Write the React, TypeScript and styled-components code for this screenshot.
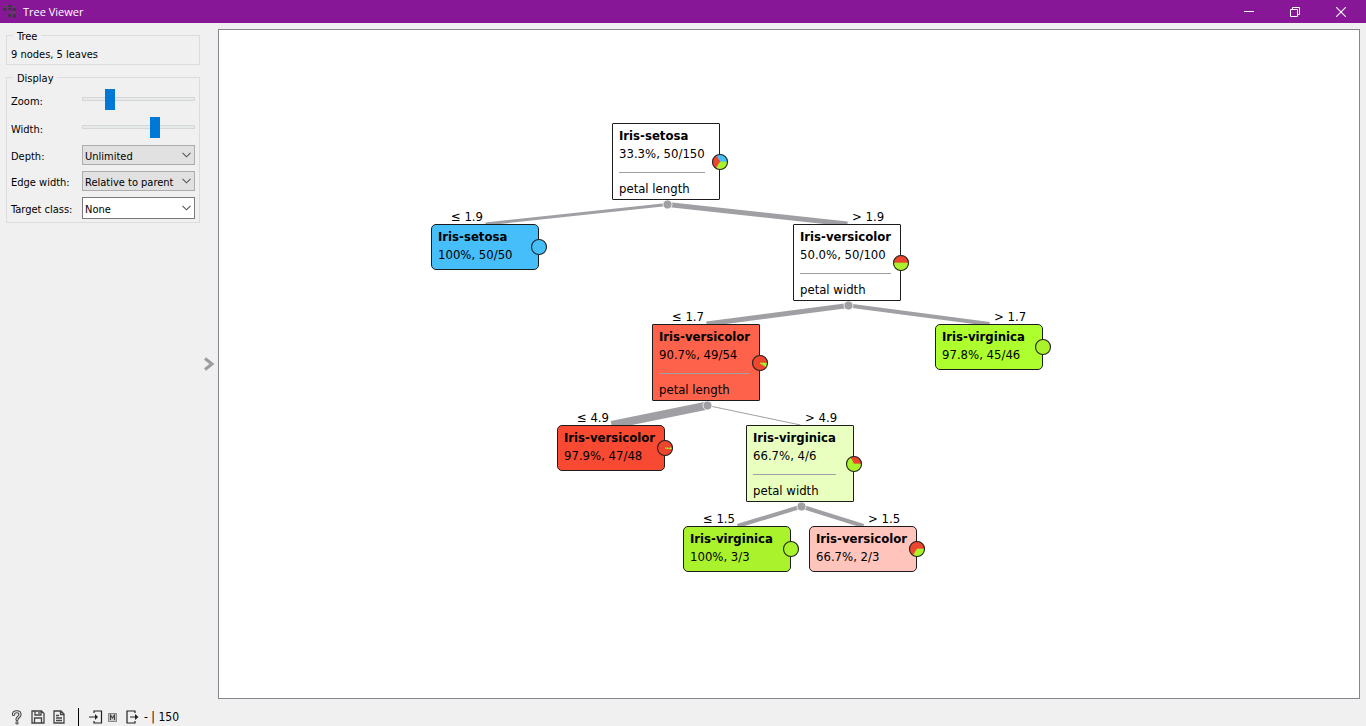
import React from 'react';
import styled, { createGlobalStyle } from 'styled-components';

const GlobalStyle = createGlobalStyle`
  * { box-sizing: border-box; }
  body {
    margin: 0;
    background: #f0f0f0;
    color: #000;
    font-family: 'DejaVu Sans Condensed', 'DejaVu Sans', sans-serif;
    font-size: 11px;
  }
`;

const Window = styled.div`
  display: flex;
  flex-direction: column;
  min-height: 100vh;
`;

const TitleBar = styled.header`
  display: flex;
  align-items: center;
  height: 23px;
  padding-left: 2px;
  background: #881798;
  color: #fff;
`;

const Title = styled.h1`
  flex: 1;
  margin: 0 0 0 5px;
  font: 400 11px/22px 'Open Sans', sans-serif;
`;

const WindowButton = styled.button`
  display: flex;
  align-items: center;
  justify-content: center;
  width: 46px;
  height: 22px;
  padding: 0 4px 0 0;
  border: 0;
  background: none;
  color: #fff;
`;

const Body = styled.div`
  display: flex;
  flex: 1;
  padding: 6px 6px 0 6px;
`;

const Sidebar = styled.aside`
  width: 194px;
  flex: none;
`;

const Group = styled.fieldset`
  min-width: 0;
  margin: 0 0 6px;
  padding: 2px 4px 0;
  border: 1px solid #dcdcdc;
`;

const Legend = styled.legend`
  height: 12px;
  margin-left: 2px;
  padding: 0 4px;
  line-height: 15px;
`;

const Info = styled.p`
  margin: 0;
  padding-top: 3px;
  line-height: 18px;
`;

const Field = styled.div<{ $height: number }>`
  display: flex;
  align-items: center;
  height: ${(p) => p.$height}px;
`;

const Label = styled.label`
  width: 71px;
  flex: none;
  padding-top: 2px;
  white-space: nowrap;
`;

const Slider = styled.input`
  flex: 1;
  min-width: 0;
  height: 22px;
  margin: 0 0 3px;
  appearance: none;
  background: none;

  &::-webkit-slider-runnable-track {
    height: 4px;
    border: 1px solid #d6d6d6;
    background: #e7eaea;
  }
  &::-webkit-slider-thumb {
    appearance: none;
    width: 10px;
    height: 21px;
    margin-top: -9px;
    background: #0078d7;
  }
`;

const SelectBox = styled.div`
  display: flex;
  position: relative;
  flex: 1;
  min-width: 0;

  svg {
    position: absolute;
    right: 4px;
    top: 50%;
    margin-top: -3px;
    pointer-events: none;
  }
`;

const Select = styled.select<{ $editable?: boolean }>`
  width: 100%;
  height: ${(p) => (p.$editable ? 22 : 20)}px;
  padding: 2px 0 0 2px;
  appearance: none;
  border: 1px solid ${(p) => (p.$editable ? '#7a7a7a' : '#adadad')};
  border-radius: 0;
  background: ${(p) => (p.$editable ? '#fff' : '#e1e1e1')};
  color: #000;
  font: inherit;
`;

const CollapseButton = styled.button`
  display: flex;
  align-items: center;
  justify-content: center;
  width: 18px;
  padding: 0;
  border: 0;
  background: none;
`;

const Canvas = styled.main`
  display: flex;
  flex: 1;
  align-items: center;
  justify-content: center;
  min-width: 0;
  overflow: auto;
  border: 1px solid #828790;
  background: #fff;
`;

const Scene = styled.div`
  position: relative;
  flex: none;
  width: 716px;
  height: 482px;
`;

const Edges = styled.svg`
  position: absolute;
  inset: 0;
  width: 100%;
  height: 100%;
  overflow: visible;
`;

const Node = styled.article<{ $x: number; $y: number; $fill: string; $leaf: boolean }>`
  position: absolute;
  left: ${(p) => p.$x}px;
  top: ${(p) => p.$y}px;
  display: flex;
  width: 108px;
  height: ${(p) => (p.$leaf ? 46 : 77)}px;
  padding: 3px 5px 0 6px;
  border: 1px solid #1c1c1c;
  border-radius: ${(p) => (p.$leaf ? 5 : 1)}px;
  background: ${(p) => p.$fill};
  font-size: 13px;
  line-height: 18px;
  white-space: nowrap;
`;

const NodeTitle = styled.h2`
  margin: 0;
  font-size: 13px;
  font-weight: 700;
`;

const NodeText = styled.p`
  margin: 0;
`;

const Divider = styled.hr`
  height: 1px;
  margin: 9px 0 7px;
  border: 0;
  background: #a0a0a4;
`;

const Pie = styled.svg`
  position: absolute;
  right: -10px;
  top: 50%;
  width: 18px;
  height: 18px;
  margin-top: -9px;
`;

const EdgeLabel = styled.span<{ $x: number; $y: number; $left: boolean }>`
  position: absolute;
  left: ${(p) => p.$x}px;
  top: ${(p) => p.$y}px;
  font-size: 13px;
  line-height: 16px;
  white-space: nowrap;
  transform: ${(p) => (p.$left ? 'translateX(-100%)' : 'none')};
`;

const StatusBar = styled.footer`
  display: flex;
  align-items: center;
  height: 27px;
  padding: 9px 0 0 6px;
`;

const IconButton = styled.button`
  display: flex;
  align-items: center;
  justify-content: center;
  width: 21px;
  height: 18px;
  padding: 0;
  border: 0;
  background: none;
`;

const Separator = styled.span`
  width: 1px;
  height: 18px;
  margin: 0 10px 0 9px;
  background: #000;
`;

const Port = styled.span`
  display: flex;
  align-items: center;
  gap: 5px;
  margin-right: 9px;
  font-size: 12px;
`;

const BLUE = '#46befa';
const RED = '#ed462f';
const GREEN = '#aaf22b';
const EDGE = '#a0a0a4';
const PIE_COLORS = [BLUE, RED, GREEN];

interface TreeNode {
  x: number;
  y: number;
  fill: string;
  title: string;
  stats: string;
  split?: string;
  shares: [number, number, number];
}

const nodes: TreeNode[] = [
  { x: 181, y: 0, fill: '#fff', title: 'Iris-setosa', stats: '33.3%, 50/150', split: 'petal length', shares: [50, 50, 50] },
  { x: 0, y: 101, fill: BLUE, title: 'Iris-setosa', stats: '100%, 50/50', shares: [50, 0, 0] },
  { x: 362, y: 101, fill: '#fff', title: 'Iris-versicolor', stats: '50.0%, 50/100', split: 'petal width', shares: [0, 50, 50] },
  { x: 221, y: 201, fill: '#ff624a', title: 'Iris-versicolor', stats: '90.7%, 49/54', split: 'petal length', shares: [0, 49, 5] },
  { x: 504, y: 201, fill: '#aeff2e', title: 'Iris-virginica', stats: '97.8%, 45/46', shares: [0, 0, 46] },
  { x: 126, y: 302, fill: '#f84a32', title: 'Iris-versicolor', stats: '97.9%, 47/48', shares: [0, 47, 1] },
  { x: 315, y: 302, fill: '#e8ffc0', title: 'Iris-virginica', stats: '66.7%, 4/6', split: 'petal width', shares: [0, 2, 4] },
  { x: 252, y: 403, fill: GREEN, title: 'Iris-virginica', stats: '100%, 3/3', shares: [0, 0, 3] },
  { x: 378, y: 403, fill: '#ffc4bc', title: 'Iris-versicolor', stats: '66.7%, 2/3', shares: [0, 2, 1] },
];

const edges = [
  { from: 0, to: 1, width: 3, label: '≤ 1.9' },
  { from: 0, to: 2, width: 5, label: '> 1.9' },
  { from: 2, to: 3, width: 5, label: '≤ 1.7' },
  { from: 2, to: 4, width: 4, label: '> 1.7' },
  { from: 3, to: 5, width: 8, label: '≤ 4.9' },
  { from: 3, to: 6, width: 1, label: '> 4.9' },
  { from: 6, to: 7, width: 4, label: '≤ 1.5' },
  { from: 6, to: 8, width: 4, label: '> 1.5' },
];

const point = (turn: number) => {
  const a = turn * 2 * Math.PI;
  return `${(9 + 7.5 * Math.cos(a)).toFixed(2)} ${(9 - 7.5 * Math.sin(a)).toFixed(2)}`;
};

/** Class distribution; slices run counter-clockwise from three o'clock. */
function Distribution({ shares }: { shares: number[] }) {
  const total = shares.reduce((a, b) => a + b, 0);
  let start = 0;
  return (
    <Pie viewBox="0 0 18 18" aria-hidden="true">
      {shares.map((share, i) => {
        if (!share) return null;
        const part = share / total;
        const from = start;
        start += part;
        if (part === 1) return <circle key={i} cx="9" cy="9" r="7.5" fill={PIE_COLORS[i]} />;
        return (
          <path
            key={i}
            fill={PIE_COLORS[i]}
            stroke={PIE_COLORS[i]}
            strokeWidth=".6"
            d={`M9 9L${point(from)}A7.5 7.5 0 ${part > 0.5 ? 1 : 0} 0 ${point(start)}Z`}
          />
        );
      })}
      <circle cx="9" cy="9" r="7.5" fill="none" stroke="#222" strokeWidth="1.1" />
    </Pie>
  );
}

function Chevron() {
  return (
    <svg width="9" height="6" viewBox="0 0 9 6" fill="none" stroke="#555" strokeWidth="1.1">
      <path d="M.5 .8L4.5 4.8L8.5 .8" />
    </svg>
  );
}

function Tree() {
  return (
    <Scene>
      <Edges>
        {edges.map((e) => {
          const a = nodes[e.from];
          const b = nodes[e.to];
          return (
            <line
              key={e.label}
              x1={a.x + 55.5}
              y1={a.y + 81.5}
              x2={b.x + 54.5}
              y2={b.y}
              stroke={EDGE}
              strokeWidth={e.width}
            />
          );
        })}
        {nodes.filter((n) => n.split).map((n) => (
          <circle key={n.stats} cx={n.x + 55.5} cy={n.y + 81.5} r="4.5" fill={EDGE} stroke="#fff" strokeWidth=".8" />
        ))}
      </Edges>
      {edges.map((e) => {
        const left = nodes[e.to].x < nodes[e.from].x;
        return (
          <EdgeLabel key={e.label} $left={left} $x={nodes[e.to].x + (left ? 52 : 59)} $y={nodes[e.to].y - 15}>
            {e.label}
          </EdgeLabel>
        );
      })}
      {nodes.map((n) => (
        <Node key={n.stats} $x={n.x} $y={n.y} $fill={n.fill} $leaf={!n.split}>
          <div>
            <NodeTitle>{n.title}</NodeTitle>
            <NodeText>{n.stats}</NodeText>
            {n.split && (
              <>
                <Divider />
                <NodeText>{n.split}</NodeText>
              </>
            )}
          </div>
          <Distribution shares={n.shares} />
        </Node>
      ))}
    </Scene>
  );
}

export default function App() {
  return (
    <Window>
      <GlobalStyle />
      <TitleBar>
        <svg width="16" height="16" viewBox="0 0 16 16" aria-hidden="true">
          <path d="M8 1V5M2.5 5V2.5H12.5V5M8 8.5H12.5M12.5 7V12M8 8V12" fill="none" stroke="#5a4562" strokeWidth="1" />
          <g fill="#3a3a3a">
            <rect x="6" y="1" width="4" height="2" />
            <rect x="1" y="4" width="3" height="3" />
            <rect x="6" y="4" width="4" height="2" />
            <rect x="11" y="4" width="3" height="3" />
            <rect x="6" y="10" width="3" height="3" />
            <rect x="11" y="10" width="3" height="4" />
          </g>
        </svg>
        <Title>Tree Viewer</Title>
        <WindowButton aria-label="Minimize">
          <svg width="10" height="10" viewBox="0 0 10 10"><path d="M0 4.5H10" stroke="currentColor" /></svg>
        </WindowButton>
        <WindowButton aria-label="Restore">
          <svg width="10" height="10" viewBox="0 0 10 10" fill="none" stroke="currentColor">
            <path d="M.5 2.5H7.5V9.5H.5ZM2.5 2.5V.5H9.5V7.5H7.5" />
          </svg>
        </WindowButton>
        <WindowButton aria-label="Close">
          <svg width="10" height="10" viewBox="0 0 10 10"><path d="M0 0L10 10M10 0L0 10" stroke="currentColor" strokeWidth="1.1" /></svg>
        </WindowButton>
      </TitleBar>

      <Body>
        <Sidebar>
          <Group>
            <Legend>Tree</Legend>
            <Info>9 nodes, 5 leaves</Info>
          </Group>
          <Group>
            <Legend>Display</Legend>
            <Field $height={30}>
              <Label htmlFor="zoom">Zoom:</Label>
              <Slider id="zoom" type="range" min="0" max="100" defaultValue="22" />
            </Field>
            <Field $height={27}>
              <Label htmlFor="width">Width:</Label>
              <Slider id="width" type="range" min="0" max="100" defaultValue="66" />
            </Field>
            <Field $height={26}>
              <Label htmlFor="depth">Depth:</Label>
              <SelectBox>
                <Select id="depth"><option>Unlimited</option></Select>
                <Chevron />
              </SelectBox>
            </Field>
            <Field $height={26}>
              <Label htmlFor="edge">Edge width:</Label>
              <SelectBox>
                <Select id="edge"><option>Relative to parent</option></Select>
                <Chevron />
              </SelectBox>
            </Field>
            <Field $height={28}>
              <Label htmlFor="target">Target class:</Label>
              <SelectBox>
                <Select id="target" $editable><option>None</option></Select>
                <Chevron />
              </SelectBox>
            </Field>
          </Group>
        </Sidebar>
        <CollapseButton aria-label="Toggle control area">
          <svg width="12" height="14" viewBox="0 0 12 14" fill="none" stroke="#9c9c9c" strokeWidth="3">
            <path d="M2 1.5L9 7L2 12.5" />
          </svg>
        </CollapseButton>
        <Canvas><Tree /></Canvas>
      </Body>

      <StatusBar>
        <IconButton aria-label="Help">
          <svg width="12" height="15" viewBox="0 0 12 15" fill="none" strokeLinecap="round">
            <path d="M2.5 4.5C2.5 .8 9 .8 9 4.5C9 7 6 6.8 6 9.5M6 12.8V13" stroke="#444" strokeWidth="3.2" />
            <path d="M2.5 4.5C2.5 .8 9 .8 9 4.5C9 7 6 6.8 6 9.5M6 12.8V13" stroke="#f0f0f0" strokeWidth="1.1" />
          </svg>
        </IconButton>
        <IconButton aria-label="Save image">
          <svg width="14" height="14" viewBox="0 0 14 14" fill="none" stroke="#444" strokeWidth="1.3">
            <path d="M1 1H10.5L13 3.5V13H1ZM4 1V5H10V1M3.5 13V8H10.5V13M8 2V4" />
          </svg>
        </IconButton>
        <IconButton aria-label="Report">
          <svg width="12" height="14" viewBox="0 0 12 14" fill="none" stroke="#444" strokeWidth="1.3">
            <path d="M1 1H8L11 4V13H1ZM7.5 1V4.5H11M3 5.5H6M3 8H9M3 10.5H9" />
          </svg>
        </IconButton>
        <Separator />
        <Port>
          <svg width="14" height="14" viewBox="0 0 14 14" fill="none" stroke="#222" strokeWidth="1.2">
            <path d="M5 3V1H12.5V13H5V11M0 7H8" />
            <path d="M6 4L9 7L6 10Z" fill="#222" stroke="none" />
          </svg>
          <svg width="9" height="9" viewBox="0 0 9 9" fill="none" aria-label="Model">
            <path d="M0 0H9V9H0Z" fill="#c9c9c9" />
            <path d="M.5 .5H8.5V8.5H.5Z" stroke="#888" />
            <path d="M2.5 7V2L4.5 5L6.5 2V7" stroke="#444" strokeWidth="1.1" />
          </svg>
        </Port>
        <Port>
          <svg width="13" height="14" viewBox="0 0 13 14" fill="none" stroke="#222" strokeWidth="1.2">
            <path d="M9 3V1H1V13H9V11M4 7H11" />
            <path d="M9 4L12.5 7L9 10Z" fill="#222" stroke="none" />
          </svg>
          <span>- | 150</span>
        </Port>
      </StatusBar>
    </Window>
  );
}
